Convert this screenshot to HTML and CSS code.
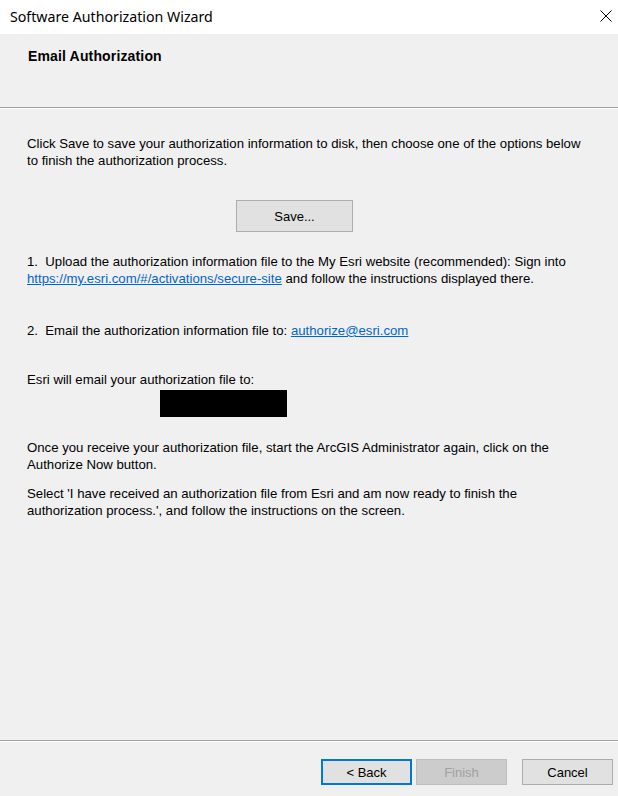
FILE: index.html
```html
<!DOCTYPE html>
<html lang="en">
<head>
    <meta charset="UTF-8">
    <title>Software Authorization Wizard</title>
    <link rel="stylesheet" href="styles.css">
</head>
<body>
    <div class="window">
        <div class="title-bar">
            <span class="title">Software Authorization Wizard</span>
            <svg class="close-icon" width="12" height="12" viewBox="0 0 12 12">
                <path d="M0.5 0.5 L11.5 11.5 M11.5 0.5 L0.5 11.5" stroke="#000" stroke-width="1" fill="none"/>
            </svg>
        </div>

        <div class="page-header">
            <div class="page-title">Email Authorization</div>
        </div>

        <div class="content">
            <p class="intro">Click Save to save your authorization information to disk, then choose one of the options below to finish the authorization process.</p>

            <div class="save-row">
                <button class="win-button save-button">Save...</button>
            </div>

            <p class="step">1.&nbsp; Upload the authorization information file to the My Esri website (recommended): Sign into <a href="#">https://my.esri.com/#/activations/secure-site</a> and follow the instructions displayed there.</p>

            <p class="step step-email">2.&nbsp; Email the authorization information file to: <a href="#">authorize@esri.com</a></p>

            <p class="step step-reply">Esri will email your authorization file to:</p>
            <div class="redacted"></div>

            <p class="step step-once">Once you receive your authorization file, start the ArcGIS Administrator again, click on the Authorize Now button.</p>

            <p class="step step-select">Select 'I have received an authorization file from Esri and am now ready to finish the authorization process.', and follow the instructions on the screen.</p>
        </div>

        <div class="footer">
            <button class="win-button focused">&lt; Back</button>
            <button class="win-button" disabled>Finish</button>
            <button class="win-button cancel">Cancel</button>
        </div>
    </div>
</body>
</html>
```

FILE: styles.css
```css
html, body {
    margin: 0;
    padding: 0;
}

body {
    font-family: "Liberation Sans", Arial, sans-serif;
    font-size: 13.2px;
    color: #000000;
    background-color: #f0f0f0;
}

.window {
    width: 618px;
    height: 796px;
    display: flex;
    flex-direction: column;
    overflow: hidden;
}

.title-bar {
    height: 34px;
    flex-shrink: 0;
    background-color: #ffffff;
    display: flex;
    align-items: center;
    justify-content: space-between;
    padding: 0 6px 2px 10px;
    box-sizing: border-box;
}

.title {
    font-family: "Noto Sans", sans-serif;
    font-size: 14.2px;
    color: #000000;
}

.close-icon {
    display: block;
}

.page-header {
    height: 75px;
    flex-shrink: 0;
    box-sizing: border-box;
    padding: 14px 0 0 28px;
    border-bottom: 1px solid #ffffff;
    box-shadow: inset 0 -1px 0 #a0a0a0;
}

.page-title {
    font-weight: bold;
    font-size: 14px;
    letter-spacing: 0.15px;
}

.content {
    flex: 1;
    padding: 26px 28px 0 27px;
}

.content p {
    margin: 0;
    line-height: 17px;
}

.intro {
    max-width: 560px;
}

.save-row {
    display: flex;
    margin: 31px 0 21px 209px;
}

.step a {
    color: #0066cc;
    text-decoration: underline;
}

.step-email {
    margin-top: 35px !important;
}

.step-reply {
    margin-top: 32px !important;
}

.redacted {
    width: 127px;
    height: 27px;
    background-color: #000000;
    margin: 2px 0 0 133px;
}

.step-once {
    margin-top: 22px !important;
}

.step-select {
    margin-top: 12px !important;
}

.footer {
    height: 56px;
    flex-shrink: 0;
    box-sizing: border-box;
    border-top: 1px solid #a0a0a0;
    box-shadow: inset 0 1px 0 #ffffff;
    display: flex;
    justify-content: flex-end;
    align-items: flex-start;
    gap: 4px;
    padding: 18px 5px 0 0;
}

.win-button {
    font-family: "Liberation Sans", Arial, sans-serif;
    font-size: 13px;
    color: #000000;
    background-color: #e1e1e1;
    border: 1px solid #adadad;
    width: 91px;
    height: 26px;
    padding: 0;
    box-sizing: border-box;
}

.win-button.save-button {
    width: 117px;
    height: 32px;
}

.win-button.focused {
    border: 2px solid #0078d7;
}

.win-button:disabled {
    color: #a0a0a0;
    background-color: #cccccc;
    border-color: #bfbfbf;
}

.win-button.cancel {
    margin-left: 11px;
}
```
